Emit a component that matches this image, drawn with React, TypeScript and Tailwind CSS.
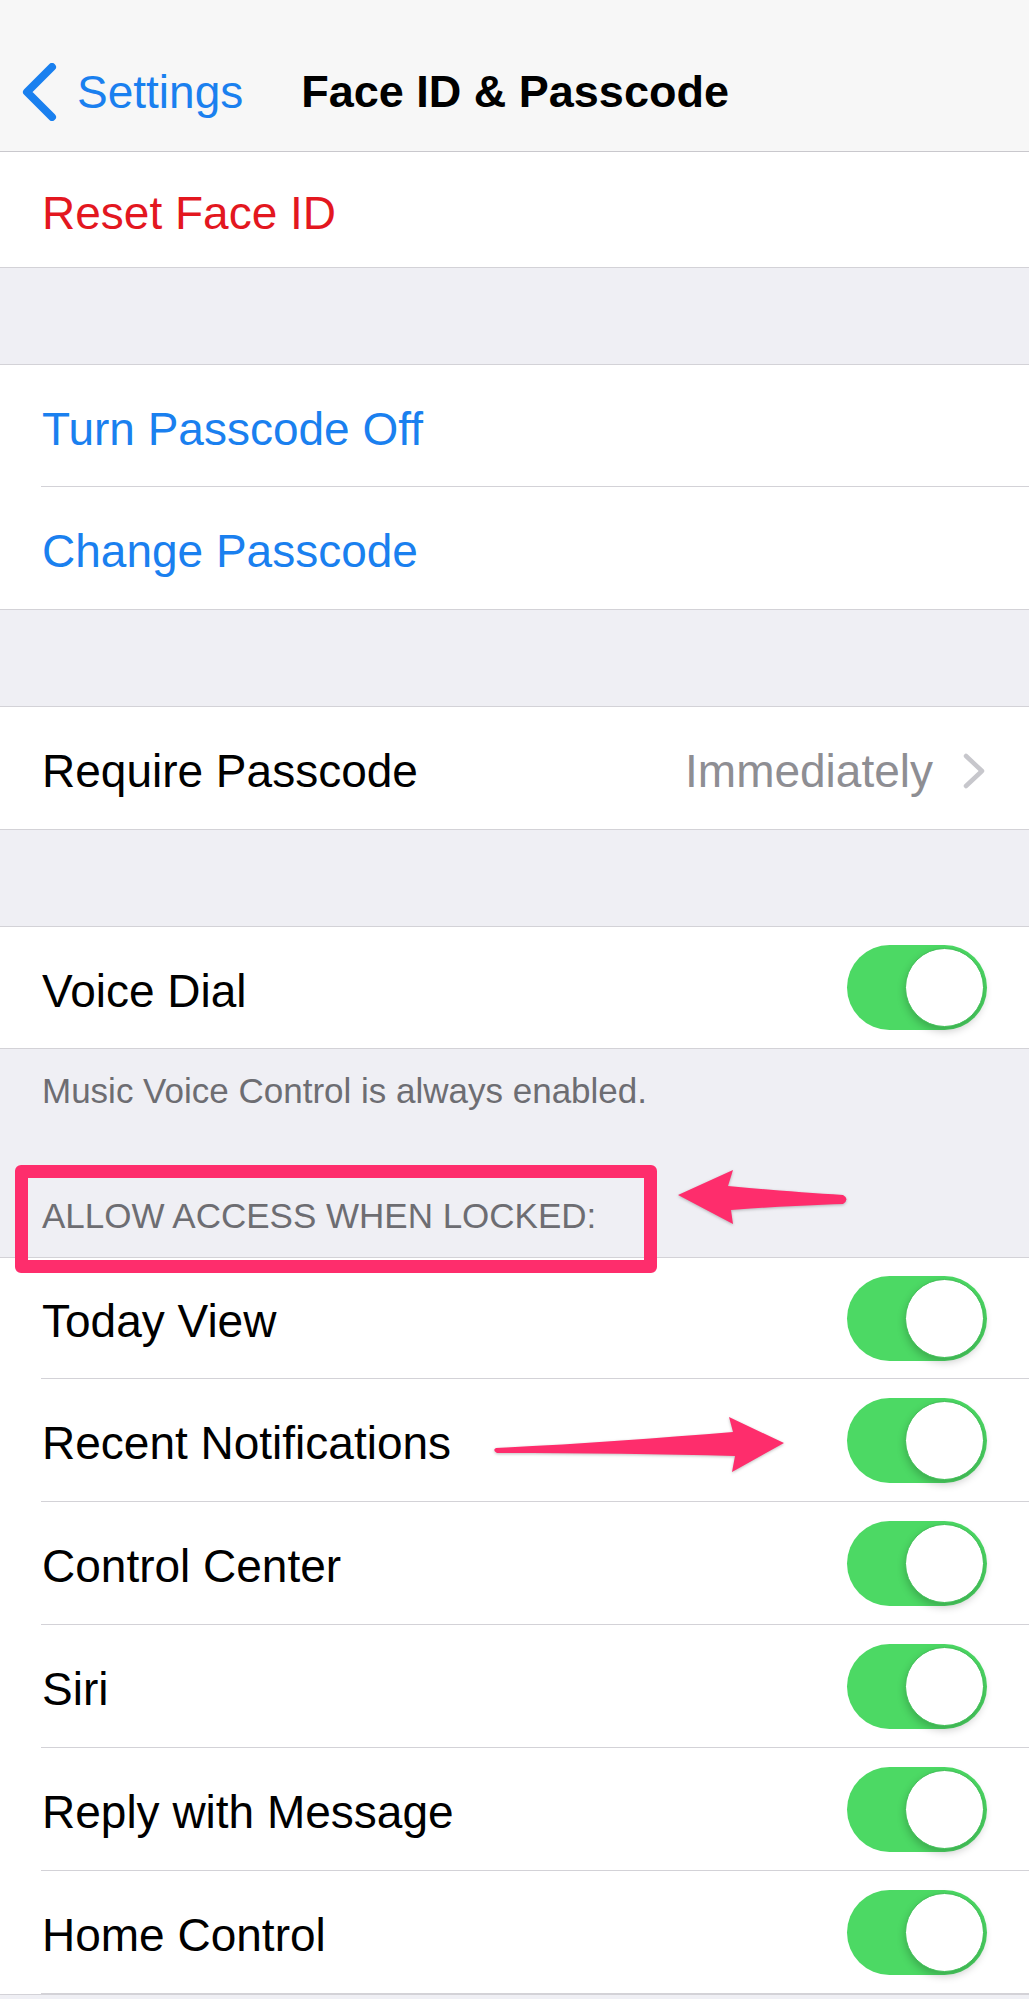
import React from 'react'

const Toggle = () => (
  <div className="flex h-[85px] w-[140px] items-center justify-end rounded-full bg-[#4cd964] pr-[3px]">
    <div className="h-[79px] w-[79px] rounded-full border border-[#3fbf55] bg-white shadow-[0_4px_8px_rgba(0,0,0,0.22)]" />
  </div>
)

const Separator = () => (
  <div className="ml-[41px] h-px bg-[#d3d2d7]" />
)

interface RowProps {
  label: string
  color?: string
  right?: React.ReactNode
  height?: string
}

const Row = ({ label, color = 'text-black', right, height = 'h-[122px]' }: RowProps) => (
  <div className={`flex items-center justify-between pl-[42px] pr-[42px] ${height}`}>
    <span className={`pt-[6px] text-[46px] leading-[56px] ${color}`}>{label}</span>
    {right}
  </div>
)

const Gap = () => <div className="h-[96px]" />

const settingsRows = [
  'Today View',
  'Recent Notifications',
  'Control Center',
  'Siri',
  'Reply with Message',
  'Home Control',
]

export default function App() {
  return (
    <div className="relative min-h-[1999px] w-full overflow-hidden bg-[#efeff4] font-['Liberation_Sans',Arial,sans-serif]">
      {/* nav bar */}
      <div className="h-[152px] border-b border-[#c9c8cd] bg-[#f7f7f7] pt-[64px]">
        <div className="flex h-[56px] items-center pl-[21px]">
          <svg width="36" height="58" viewBox="0 0 36 58">
            <path d="M31 4 L6 29 L31 54" fill="none" stroke="#1a80ef" strokeWidth="8" strokeLinecap="round" strokeLinejoin="round" />
          </svg>
          <span className="ml-[20px] text-[46px] leading-[56px] text-[#1a80ef]">Settings</span>
          <span className="ml-[58px] text-[45px] font-bold leading-[56px] text-black">Face ID &amp; Passcode</span>
        </div>
      </div>

      <div className="border-b border-[#d3d2d7] bg-white">
        <Row label="Reset Face ID" color="text-[#e3171f]" height="h-[115px]" />
      </div>

      <Gap />

      <div className="border-y border-[#d3d2d7] bg-white">
        <Row label="Turn Passcode Off" color="text-[#1a80ef]" height="h-[121px]" />
        <Separator />
        <Row label="Change Passcode" color="text-[#1a80ef]" />
      </div>

      <Gap />

      <div className="border-y border-[#d3d2d7] bg-white">
        <Row
          label="Require Passcode"
          right={
            <div className="flex items-center pt-[6px]">
              <span className="text-[46px] leading-[56px] text-[#8e8e93]">Immediately</span>
              <svg className="ml-[28px]" width="26" height="36" viewBox="0 0 26 36">
                <path d="M5 3 L21 18 L5 33" fill="none" stroke="#c7c7cc" strokeWidth="4.5" strokeLinecap="round" strokeLinejoin="round" />
              </svg>
            </div>
          }
        />
      </div>

      <Gap />

      <div className="border-y border-[#d3d2d7] bg-white">
        <Row label="Voice Dial" height="h-[121px]" right={<Toggle />} />
      </div>

      {/* footer + section header */}
      <div className="relative h-[208px] pl-[42px] pt-[22px]">
        <p className="text-[35px] leading-[40px] text-[#6d6d72]">Music Voice Control is always enabled.</p>
        <p className="mt-[85px] text-[35px] leading-[40px] text-[#6d6d72]">ALLOW ACCESS WHEN LOCKED:</p>
        <div className="absolute left-[15px] top-[116px] z-10 h-[108px] w-[642px] rounded-[6px] border-[13px] border-[#fe2d6c]" />
      </div>

      <div className="border-y border-[#d3d2d7] bg-white">
        {settingsRows.map((label, i) => (
          <div key={label}>
            <Row label={label} height={i === 0 ? 'h-[120px]' : 'h-[122px]'} right={<Toggle />} />
            <Separator />
          </div>
        ))}
      </div>

      {/* annotation arrows */}
      <svg
        className="pointer-events-none absolute left-0 top-[1150px] z-20"
        width="1029"
        height="340"
        viewBox="0 1150 1029 340"
      >
        <g fill="#fe2d6c" style={{ filter: 'drop-shadow(0 1px 1.5px rgba(0,0,0,0.25))' }}>
          <path d="M678 1195 L733 1170 L728 1186 C770 1190 810 1193 843 1195 Q850 1199 843 1204 C810 1205 770 1207 731 1210 L733 1224 Z" />
          <path d="M496 1448 C580 1444 660 1438 733 1432 L729 1417 L784 1443 L732 1472 L735 1456 C660 1454 580 1453 497 1453 Q492 1450 496 1448 Z" />
        </g>
      </svg>
    </div>
  )
}
